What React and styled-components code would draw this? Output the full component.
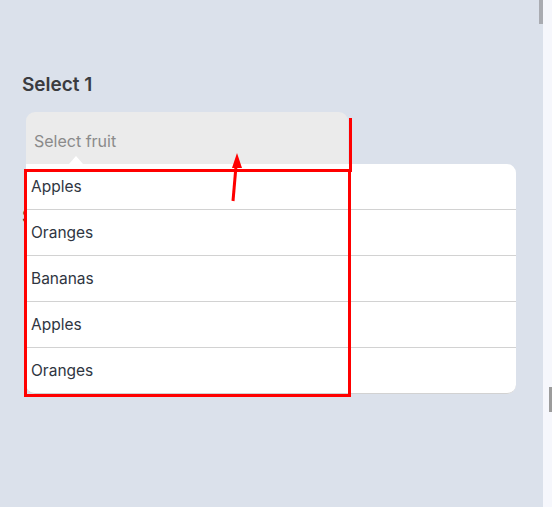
import React from "react";
import styled, { createGlobalStyle } from "styled-components";

const GlobalStyle = createGlobalStyle`
  html, body {
    margin: 0;
    padding: 0;
    overflow: hidden;
  }
  body {
    font-family: Inter, "Noto Sans", sans-serif;
  }
`;

const Frame = styled.div`
  display: flex;
  width: 552px;
  height: 507px;
`;

const Panel = styled.main`
  position: relative;
  flex: 1;
  display: flex;
  flex-direction: column;
  gap: 41px;
  background: #dbe1eb;
  padding: 73px 0 0 22px;
  box-sizing: border-box;
`;

const SideTrack = styled.div`
  position: relative;
  width: 9px;
  background: #f6f7fc;
`;

const Thumb = styled.div`
  position: absolute;
  right: 0;
  top: ${(p) => p.$top}px;
  width: ${(p) => p.$w}px;
  height: ${(p) => p.$h}px;
  background: ${(p) => p.$color};
`;

const Field = styled.div`
  display: flex;
  flex-direction: column;
  gap: 15px;
`;

const Label = styled.h2`
  margin: 0;
  font-size: 19px;
  line-height: 24px;
  font-weight: 600;
  color: #3a3b3f;
`;

const SelectWrap = styled.div`
  position: relative;
  margin-left: 4px;
  width: 322px;
  z-index: ${(p) => (p.$open ? 2 : 1)};
`;

const SelectBox = styled.div`
  display: flex;
  align-items: center;
  height: 52px;
  padding: 5px 8px 0;
  box-sizing: border-box;
  border-radius: 9px 9px 0 0;
  background: #ebebeb;
  font-size: 16px;
  color: #8a8a8a;
`;

const Dropdown = styled.ul`
  position: absolute;
  top: 52px;
  left: 0;
  width: 490px;
  margin: 0;
  padding: 0;
  list-style: none;
  display: flex;
  flex-direction: column;
  background: #fff;
  border-radius: 0 9px 9px 9px;

  &::before {
    content: "";
    position: absolute;
    top: -8px;
    left: 43px;
    border-left: 7px solid transparent;
    border-right: 7px solid transparent;
    border-bottom: 8px solid #fff;
  }
`;

const Option = styled.li`
  display: flex;
  align-items: center;
  height: 45px;
  padding-left: 5px;
  border-bottom: 1px solid #d2d2d2;
  font-size: 15.5px;
  color: #2f3541;
  &:last-child {
    border-radius: 0 0 9px 9px;
  }
`;

const Highlight = styled.div`
  position: absolute;
  left: -2px;
  top: 57px;
  width: 327px;
  height: 228px;
  box-sizing: border-box;
  border: 3px solid #ff0000;
  pointer-events: none;
`;

const HighlightTail = styled.div`
  position: absolute;
  left: 323px;
  top: 6px;
  width: 3px;
  height: 54px;
  background: #ff0000;
`;

const Arrow = styled.svg`
  position: absolute;
  left: 0;
  top: 0;
  overflow: visible;
  pointer-events: none;
`;

const fruits = ["Apples", "Oranges", "Bananas", "Apples", "Oranges"];

const App = () => {
  return (
    <>
      <GlobalStyle />
      <Frame>
        <Panel>
          <Field>
            <Label>Select 1</Label>
            <SelectWrap $open>
              <SelectBox>Select fruit</SelectBox>
              <Dropdown>
                {fruits.map((fruit, i) => (
                  <Option key={i}>{fruit}</Option>
                ))}
              </Dropdown>
              <HighlightTail />
              <Highlight />
              <Arrow width="1" height="1">
                <line x1="207" y1="89" x2="210" y2="54" stroke="#ff0000" strokeWidth="3" />
                <polygon points="211,41 206,56 216,56" fill="#ff0000" />
              </Arrow>
            </SelectWrap>
          </Field>
          <Field>
            <Label>Select 2</Label>
            <SelectWrap>
              <SelectBox>Select fruit</SelectBox>
            </SelectWrap>
          </Field>
          <Thumb $top={0} $w={4} $h={24} $color="#a9abb1" />
        </Panel>
        <SideTrack>
          <Thumb $top={387} $w={3} $h={25} $color="#9c9c9c" />
        </SideTrack>
      </Frame>
    </>
  );
};

export default App;
